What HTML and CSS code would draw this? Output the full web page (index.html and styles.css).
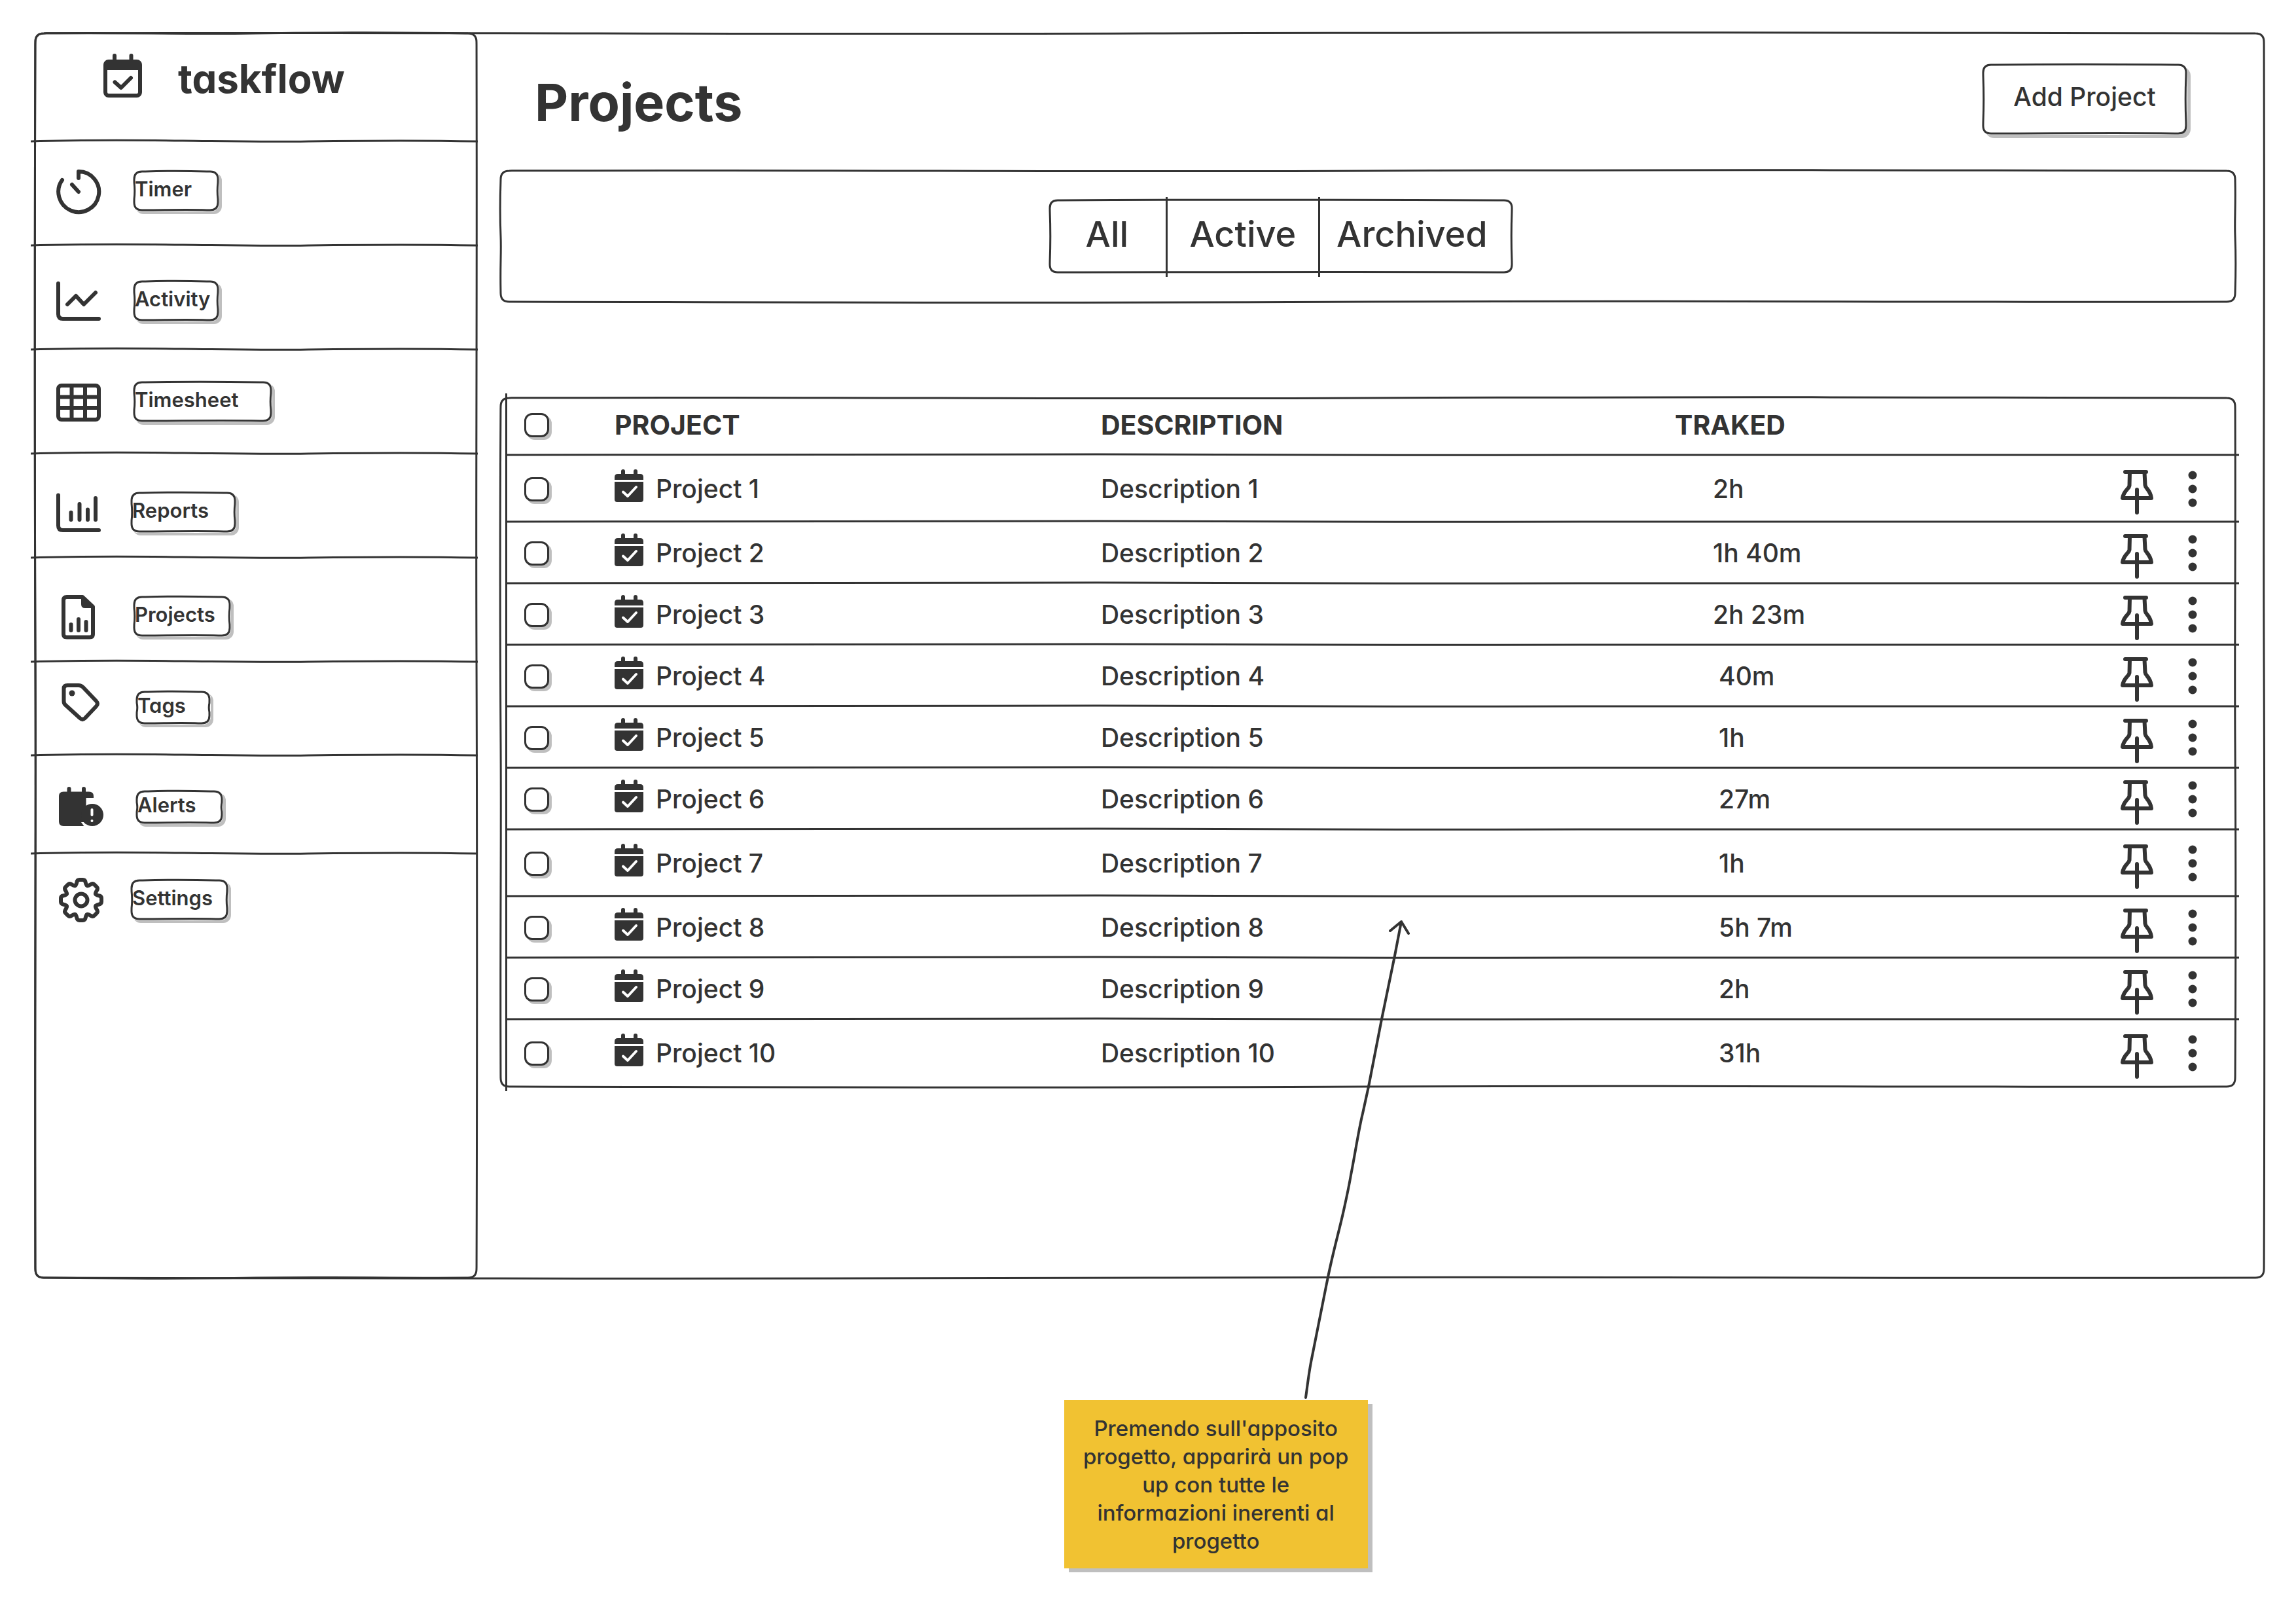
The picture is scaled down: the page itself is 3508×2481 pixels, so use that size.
FILE: index.html
```html
<!DOCTYPE html>
<html lang="it">
<head>
<meta charset="utf-8">
<meta name="viewport" content="width=device-width, initial-scale=1">
<title>taskflow – Projects</title>
<link rel="stylesheet" href="styles.css">
</head>
<body>
<svg class="defs" aria-hidden="true">
  <symbol id="i-cal" viewBox="0 0 44 60">
    <path d="M13 3v6M32 3v6" stroke="#333" stroke-width="6" stroke-linecap="round"/>
    <path d="M5 7H39Q44 7 44 12V16H0V12Q0 7 5 7ZM0 19H44V46Q44 50 40 50H4Q0 50 0 46Z" fill="#333"/>
    <path d="M13 34.500L20 41L33 27" fill="none" stroke="#fff" stroke-width="4" stroke-linecap="round" stroke-linejoin="round"/>
  </symbol>
  <symbol id="i-pin" viewBox="0 0 50 78">
    <g fill="none" stroke="#333" stroke-width="6" stroke-linecap="round" stroke-linejoin="round">
      <path d="M7 13H39M14 14L13.500 34Q13 37 10 39.500Q4 46 3 53H47Q46 45 40 38Q38 36 37.500 33L36.500 14M25 40V75"/>
    </g>
  </symbol>
  <symbol id="i-dots" viewBox="0 0 14 56">
    <circle cx="7" cy="7" r="6.500" fill="#333"/><circle cx="7" cy="28" r="6.500" fill="#333"/><circle cx="7" cy="49" r="6.500" fill="#333"/>
  </symbol>
</svg>

<div class="app frame">
  <aside class="sidebar frame">
    <div class="brand rule">
      <svg class="brand-icon" viewBox="0 0 59 67" aria-hidden="true">
        <path d="M17 3v8M42.500 3v8" stroke="#333" stroke-width="6" stroke-linecap="round"/>
        <rect x="3" y="12" width="53" height="52" rx="5" fill="none" stroke="#333" stroke-width="6"/>
        <path d="M3 12H56V25H3Z" fill="#333"/>
        <path d="M17.500 43.500L27 52L42 37" fill="none" stroke="#333" stroke-width="6" stroke-linecap="round" stroke-linejoin="round"/>
      </svg>
      <span class="brand-name">taskflow</span>
    </div>
    <nav class="nav" aria-label="Menu">
      <div class="nav-item rule high">
        <svg class="nav-icon" viewBox="0 0 80 80" aria-hidden="true"><path d="M37 22V12A31 31 0 1 1 12 25M27 32L37 43"/></svg>
        <a class="nav-label frame soft" href="#timer">Timer</a>
      </div>
      <div class="nav-item rule low">
        <svg class="nav-icon" viewBox="0 0 80 80" aria-hidden="true"><path d="M6 15V62Q6 69 13 69H68M20 47L33 34L45 47L63 29"/></svg>
        <a class="nav-label frame soft" href="#activity">Activity</a>
      </div>
      <div class="nav-item rule mid">
        <svg class="nav-icon" viewBox="0 0 80 80" aria-hidden="true"><rect x="6" y="17" width="62" height="52" rx="5"/><path d="M26.500 17V69M47 17V69M6 34.500H68M6 51H68"/></svg>
        <a class="nav-label frame soft wide" href="#timesheet">Timesheet</a>
      </div>
      <div class="nav-item rule lowest near">
        <svg class="nav-icon" viewBox="0 0 80 80" aria-hidden="true"><path d="M6 15.500V62Q6 69 13 69H68M25.500 42V53M38.500 29V53M51 37.500V53M63 20V53"/></svg>
        <a class="nav-label frame soft medium" href="#reports">Reports</a>
      </div>
      <div class="nav-item rule lowest">
        <svg class="nav-icon" viewBox="0 0 80 80" aria-hidden="true"><path d="M19 12H43L59 27V69Q59 73.500 54 73.500H19Q14 73.500 14 69V17Q14 12 19 12ZM25.500 54V63M37 46V63M48.500 50V63"/><path class="solid" d="M41 11V23Q41 29 47 29H60Z"/></svg>
        <a class="nav-label frame soft normal" href="#projects">Projects</a>
      </div>
      <div class="nav-item rule high far short">
        <svg class="nav-icon" viewBox="0 0 80 80" aria-hidden="true"><path d="M14.500 15Q14.500 10 20 10H37Q41 10 44 13L64 34Q68 38 64 42L47 60Q43 64 39 60L17 40Q14.500 38 14.500 34Z"/><circle class="solid" cx="27" cy="22" r="4.500"/></svg>
        <a class="nav-label frame soft tags" href="#tags">Tags</a>
      </div>
      <div class="nav-item rule low far middling">
        <svg class="nav-icon" viewBox="0 0 80 80" aria-hidden="true">
          <path d="M22.500 16V22M45 16V22"/>
          <path class="solid" d="M14 20.500H53Q60 20.500 60 27V30H48.500V73H14Q7 73 7 66V27Q7 20.500 14 20.500Z"/>
          <path class="gap" d="M41 67H45L52 74H46Z"/>
          <circle class="solid" cx="58" cy="56" r="17"/>
          <path class="mark" d="M57.500 48V56M57.500 65V65.100"/>
        </svg>
        <a class="nav-label frame soft alerts" href="#alerts">Alerts</a>
      </div>
      <div class="nav-item top near last">
        <svg class="nav-icon" viewBox="0 0 80 80" aria-hidden="true">
          <g transform="translate(41 42)">
            <path id="tooth" d="M-9.500 -22Q-7.500 -23 -6.700 -27Q-6 -31 -2.500 -31H2.500Q6 -31 6.700 -27Q7.500 -23 9.500 -22"/>
            <use href="#tooth" transform="rotate(45)"/><use href="#tooth" transform="rotate(90)"/><use href="#tooth" transform="rotate(135)"/><use href="#tooth" transform="rotate(180)"/><use href="#tooth" transform="rotate(225)"/><use href="#tooth" transform="rotate(270)"/><use href="#tooth" transform="rotate(315)"/>
            <circle r="9.500"/>
          </g>
        </svg>
        <a class="nav-label frame soft normal" href="#settings">Settings</a>
      </div>
    </nav>
  </aside>

  <main class="main">
    <header class="page-head">
      <h1 class="title">Projects</h1>
      <button class="add frame soft" type="button">Add Project</button>
    </header>

    <section class="panel filters frame" aria-label="Filter">
      <div class="segments frame soft" role="group">
        <button type="button" class="segment seg-all">All</button>
        <button type="button" class="segment seg-active">Active</button>
        <button type="button" class="segment seg-archived">Archived</button>
      </div>
    </section>

    <section class="panel list frame">
      <div class="table-wrap">
        <table class="projects">
          <colgroup><col class="c-check"><col class="c-project"><col class="c-desc"><col><col class="c-actions"></colgroup>
          <thead>
            <tr class="rule"><th class="check"><input type="checkbox" aria-label="Select all"></th><th>PROJECT</th><th class="desc">DESCRIPTION</th><th class="tracked">TRAKED</th><th></th></tr>
          </thead>
          <tbody>
            <tr class="rule tall"><td class="check"><input type="checkbox" aria-label="Project 1"></td><td><div class="name"><svg class="cal"><use href="#i-cal"/></svg>Project 1</div></td><td class="desc">Description 1</td><td class="tracked">2h</td><td><div class="actions"><button type="button" class="icon-btn" aria-label="Pin"><svg class="pin"><use href="#i-pin"/></svg></button><button type="button" class="icon-btn" aria-label="More"><svg class="dots"><use href="#i-dots"/></svg></button></div></td></tr>
            <tr class="rule"><td class="check"><input type="checkbox" aria-label="Project 2"></td><td><div class="name"><svg class="cal"><use href="#i-cal"/></svg>Project 2</div></td><td class="desc">Description 2</td><td class="tracked">1h 40m</td><td><div class="actions"><button type="button" class="icon-btn" aria-label="Pin"><svg class="pin"><use href="#i-pin"/></svg></button><button type="button" class="icon-btn" aria-label="More"><svg class="dots"><use href="#i-dots"/></svg></button></div></td></tr>
            <tr class="rule"><td class="check"><input type="checkbox" aria-label="Project 3"></td><td><div class="name"><svg class="cal"><use href="#i-cal"/></svg>Project 3</div></td><td class="desc">Description 3</td><td class="tracked">2h 23m</td><td><div class="actions"><button type="button" class="icon-btn" aria-label="Pin"><svg class="pin"><use href="#i-pin"/></svg></button><button type="button" class="icon-btn" aria-label="More"><svg class="dots"><use href="#i-dots"/></svg></button></div></td></tr>
            <tr class="rule"><td class="check"><input type="checkbox" aria-label="Project 4"></td><td><div class="name"><svg class="cal"><use href="#i-cal"/></svg>Project 4</div></td><td class="desc">Description 4</td><td class="tracked">40m</td><td><div class="actions"><button type="button" class="icon-btn" aria-label="Pin"><svg class="pin"><use href="#i-pin"/></svg></button><button type="button" class="icon-btn" aria-label="More"><svg class="dots"><use href="#i-dots"/></svg></button></div></td></tr>
            <tr class="rule"><td class="check"><input type="checkbox" aria-label="Project 5"></td><td><div class="name"><svg class="cal"><use href="#i-cal"/></svg>Project 5</div></td><td class="desc">Description 5</td><td class="tracked">1h</td><td><div class="actions"><button type="button" class="icon-btn" aria-label="Pin"><svg class="pin"><use href="#i-pin"/></svg></button><button type="button" class="icon-btn" aria-label="More"><svg class="dots"><use href="#i-dots"/></svg></button></div></td></tr>
            <tr class="rule"><td class="check"><input type="checkbox" aria-label="Project 6"></td><td><div class="name"><svg class="cal"><use href="#i-cal"/></svg>Project 6</div></td><td class="desc">Description 6</td><td class="tracked">27m</td><td><div class="actions"><button type="button" class="icon-btn" aria-label="Pin"><svg class="pin"><use href="#i-pin"/></svg></button><button type="button" class="icon-btn" aria-label="More"><svg class="dots"><use href="#i-dots"/></svg></button></div></td></tr>
            <tr class="rule tall"><td class="check"><input type="checkbox" aria-label="Project 7"></td><td><div class="name"><svg class="cal"><use href="#i-cal"/></svg>Project 7</div></td><td class="desc">Description 7</td><td class="tracked">1h</td><td><div class="actions"><button type="button" class="icon-btn" aria-label="Pin"><svg class="pin"><use href="#i-pin"/></svg></button><button type="button" class="icon-btn" aria-label="More"><svg class="dots"><use href="#i-dots"/></svg></button></div></td></tr>
            <tr class="rule"><td class="check"><input type="checkbox" aria-label="Project 8"></td><td><div class="name"><svg class="cal"><use href="#i-cal"/></svg>Project 8</div></td><td class="desc">Description 8</td><td class="tracked">5h 7m</td><td><div class="actions"><button type="button" class="icon-btn" aria-label="Pin"><svg class="pin"><use href="#i-pin"/></svg></button><button type="button" class="icon-btn" aria-label="More"><svg class="dots"><use href="#i-dots"/></svg></button></div></td></tr>
            <tr class="rule"><td class="check"><input type="checkbox" aria-label="Project 9"></td><td><div class="name"><svg class="cal"><use href="#i-cal"/></svg>Project 9</div></td><td class="desc">Description 9</td><td class="tracked">2h</td><td><div class="actions"><button type="button" class="icon-btn" aria-label="Pin"><svg class="pin"><use href="#i-pin"/></svg></button><button type="button" class="icon-btn" aria-label="More"><svg class="dots"><use href="#i-dots"/></svg></button></div></td></tr>
            <tr class="tall"><td class="check"><input type="checkbox" aria-label="Project 10"></td><td><div class="name"><svg class="cal"><use href="#i-cal"/></svg>Project 10</div></td><td class="desc">Description 10</td><td class="tracked">31h</td><td><div class="actions"><button type="button" class="icon-btn" aria-label="Pin"><svg class="pin"><use href="#i-pin"/></svg></button><button type="button" class="icon-btn" aria-label="More"><svg class="dots"><use href="#i-dots"/></svg></button></div></td></tr>
          </tbody>
        </table>
      </div>
    </section>
  </main>
</div>

<div class="notes">
  <div class="note">
    <svg class="arrow" viewBox="0 0 180 744" aria-hidden="true">
      <path d="M9 740C11 726 14 700 18 681C25 645 34 600 43 556C52 512 60 486 67 454C71 436 75 418 78 400C84 370 90 330 96 306C99 292 102 279 105 265L125 162L145 65L155 13M138 27L155 13L166 31"/>
    </svg>
    <p class="note-text">Premendo sull'apposito progetto, apparirà un pop up con tutte le informazioni inerenti al progetto</p>
  </div>
</div>
</body>
</html>
```
FILE: styles.css
```css
:root {
  --ink: #333333;
  --shadow: #bfbfbf;
  --rule: url("data:image/svg+xml,%3Csvg xmlns='http://www.w3.org/2000/svg' viewBox='0 0 100 8' preserveAspectRatio='none'%3E%3Cpath d='M0 5C10 3 22 3 34 4S52 6 62 5S86 3 100 5' fill='none' stroke='%23333' stroke-width='3' vector-effect='non-scaling-stroke'/%3E%3C/svg%3E");
  --outline: url("data:image/svg+xml,%3Csvg xmlns='http://www.w3.org/2000/svg' width='300' height='300' viewBox='0 0 300 300'%3E%3Cpath d='M16 3C70 1 100 5 150 3S240 2 284 3Q297 3 297 16C298 80 296 110 297 150S298 240 297 284Q297 297 284 297C230 298 200 295 150 297S60 298 16 297Q3 297 3 284C2 220 4 190 3 150S2 60 3 16Q3 3 16 3Z' fill='none' stroke='%23333' stroke-width='3'/%3E%3C/svg%3E");
  --outline-soft: url("data:image/svg+xml,%3Csvg xmlns='http://www.w3.org/2000/svg' width='300' height='300' viewBox='0 0 300 300'%3E%3Cpath d='M15 3C90 2 200 2 285 3Q297 3 297 15C296 100 296 200 297 285Q297 297 285 297C200 296 100 297 15 297Q3 297 3 285C4 200 4 100 3 15Q3 3 15 3Z' fill='none' stroke='%23333' stroke-width='3'/%3E%3C/svg%3E");
}

* { box-sizing: border-box; }

body {
  margin: 0;
  background: #ffffff;
  color: var(--ink);
  font-family: Inter, "Noto Sans", sans-serif;
  font-feature-settings: "cv11";
  font-size: 39px;
  font-weight: 500;
  line-height: 48px;
}

button, input { font: inherit; color: inherit; font-feature-settings: inherit; }

.defs { position: absolute; width: 0; height: 0; }

/* Hand-drawn outline with gently wavering edges */
.frame { position: relative; }
.frame::before {
  content: "";
  position: absolute;
  inset: -1px;
  border: 20px solid transparent;
  border-image: var(--outline) 20 stretch;
  pointer-events: none;
}
.frame.soft::before { border-image-source: var(--outline-soft); }

.rule {
  background: var(--rule) left bottom / 100% 8px no-repeat;
}

.app {
  display: flex;
  margin: 49px 47px 0 52px;
}

/* Sidebar */
.sidebar { flex: 0 0 678px; }

.brand {
  display: flex;
  align-items: center;
  gap: 55px;
  margin-left: -5px;
  padding: 33px 0 70px 111px;
}
.brand-icon { width: 59px; height: 67px; }
.brand-name {
  padding-top: 9px;
  font-size: 60px;
  font-weight: 700;
  line-height: 58px;
}

.nav-item {
  display: flex;
  align-items: flex-start;
  gap: 40px;
  height: 159px;
  margin-left: -5px;
  padding-left: 36px;
}
.nav-item.short { height: 143px; }
.nav-item.middling { height: 150px; }
.nav-item.near { gap: 36px; }
.nav-item.far { gap: 44px; }
.nav-item.top { padding-top: 36px; }
.nav-item.high { padding-top: 41px; }
.nav-item.mid { padding-top: 45px; }
.nav-item.low { padding-top: 50px; }
.nav-item.lowest { padding-top: 55px; }

.nav-icon {
  flex: none;
  width: 80px;
  height: 80px;
  margin-top: -10px;
  fill: none;
  stroke: var(--ink);
  stroke-width: 6px;
  stroke-linecap: round;
  stroke-linejoin: round;
}
.nav-icon .solid { fill: var(--ink); stroke: none; }
.nav-icon .gap { fill: #ffffff; stroke: none; }
.nav-icon .mark { stroke: #ffffff; stroke-width: 4px; }

.nav-label {
  width: 132px;
  height: 63px;
  padding: 9px 0 0 3px;
  border-radius: 12px;
  box-shadow: 4px 4px 0 var(--shadow);
  background: #ffffff;
  color: inherit;
  font-size: 31px;
  font-weight: 600;
  line-height: 40px;
  text-decoration: none;
}
.nav-label.wide { width: 213px; }
.nav-label.medium { width: 162px; }
.nav-label.normal { width: 150px; }
.nav-label.tags { width: 115px; }
.nav-label.alerts { width: 134px; }
.nav-label.tags, .nav-label.alerts { height: 52px; padding-top: 3px; }
.far .nav-icon { margin-top: -18px; }

/* Main area */
.main {
  flex: 1;
  min-width: 0;
  padding: 48px 44px 292px 33px;
}

.page-head {
  display: flex;
  align-items: center;
  justify-content: space-between;
  padding: 0 75px 53px 54px;
}
.title {
  margin: 0;
  padding-top: 8px;
  font-size: 79px;
  font-weight: 700;
  line-height: 100px;
}

.add {
  width: 314px;
  height: 109px;
  padding: 0 0 8px;
  border: 0;
  border-radius: 14px;
  box-shadow: 5px 5px 0 var(--shadow);
  background: #ffffff;
}

.filters {
  display: grid;
  grid-template-columns: 838fr auto 1104fr;
  padding: 45px 0;
}
.segments { grid-column: 2; display: flex; height: 114px; }
.segment {
  margin: -3px 0 -5px;
  padding: 0 0 9px;
  border: 0;
  background: none;
  font-size: 54px;
}
.segment + .segment { border-left: 3px solid var(--ink); }
.seg-all { width: 179px; }
.seg-active { width: 233px; }
.seg-archived { width: 298px; padding-right: 14px; }

.list { display: flow-root; margin-top: 143px; }
.table-wrap {
  margin: -5px -4px -5px 9px;
  padding: 5px 0;
  border-left: 3px solid var(--ink);
}

.projects {
  width: 100%;
  table-layout: fixed;
  border-collapse: collapse;
}
.c-check { width: 161px; }
.c-project { width: 28%; }
.c-desc { width: 33%; }
.c-actions { width: 184px; }

.projects tr { height: 94px; }
.projects thead tr { height: 92px; }
.projects tr.tall { height: 102px; }
.projects th, .projects td { padding: 0 0 4px 3px; text-align: left; vertical-align: middle; }
.projects th { font-size: 41px; font-weight: 700; padding-bottom: 6px; }
.projects .check { padding-left: 26px; line-height: 0; }
.projects .desc { padding-left: 5px; }
.projects th.tracked { padding-left: 9px; }
.projects td.tracked { padding-left: 67px; }
.projects tr:nth-child(n+4) td.tracked { padding-left: 76px; }

input[type="checkbox"] {
  appearance: none;
  width: 38px;
  height: 37px;
  margin: 0;
  border: 3px solid var(--ink);
  border-radius: 12px;
  box-shadow: 4px 4px 0 var(--shadow);
  background: #ffffff;
}

.name { display: flex; align-items: center; gap: 19px; }
.cal { width: 44px; height: 60px; }

.actions { display: flex; align-items: center; gap: 53px; }
.icon-btn { padding: 0; border: 0; background: none; line-height: 0; }
.pin { width: 50px; height: 78px; }
.dots { width: 14px; height: 56px; }

/* Sticky note under the window */
.notes { padding: 185px 0 78px calc(46% + 12px); }
.note {
  position: relative;
  width: 464px;
  padding: 22px 22px 20px;
  background: #f1c232;
  box-shadow: 7px 6px 0 var(--shadow);
}
.note-text {
  margin: 0;
  font-size: 33px;
  line-height: 43px;
  text-align: center;
}
.arrow {
  position: absolute;
  left: 360px;
  bottom: 100%;
  width: 180px;
  height: 744px;
  fill: none;
  stroke: var(--ink);
  stroke-width: 4px;
  stroke-linecap: round;
  stroke-linejoin: round;
}
```
